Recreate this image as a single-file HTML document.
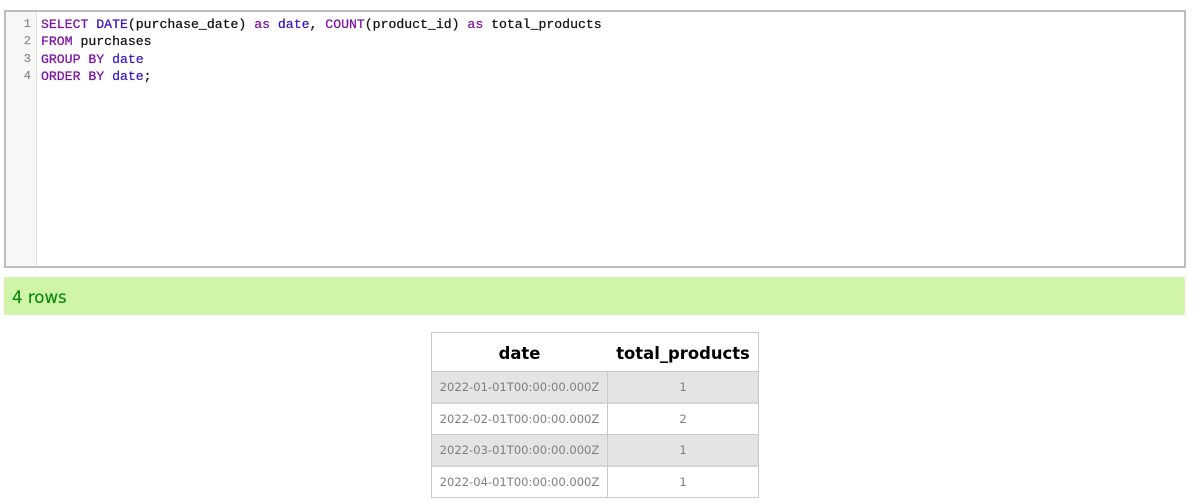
<!DOCTYPE html>
<html>
<head>
<meta charset="utf-8">
<style>
html,body{margin:0;padding:0;background:#fff;width:1200px;height:504px;overflow:hidden}
body{position:relative}
div{position:absolute;box-sizing:border-box}
#ed{left:4px;top:10px;width:1182px;height:258px;border:2px solid #bdbdbd;background:#fff}
#gut{left:6px;top:12px;width:31px;height:254px;background:#f7f7f7;border-right:1px solid #e2e2e2}
.c{left:41px;height:17px;font:13.17px/17px "Liberation Mono",monospace;color:#111;white-space:pre;-webkit-text-stroke:.25px currentColor;filter:blur(.25px)}
.n{left:6px;width:25px;text-align:right;font:12px/17px "Liberation Mono",monospace;color:#8f8f8f;height:17px;-webkit-text-stroke:.25px currentColor;filter:blur(.25px)}
.k{color:#7d12a5}.b{color:#3a14c0}
#ok{left:4px;top:277px;width:1181px;height:38px;background:#d0f5a9;color:#0a8a0a;font:16.6px/42px "DejaVu Sans",sans-serif;padding-left:8px;-webkit-text-stroke:.15px currentColor;overflow:hidden}
.h,.d{height:31px;text-align:center;font-family:"DejaVu Sans",sans-serif;white-space:nowrap}
.h{top:333px;height:38px;font-size:16.4px;font-weight:bold;line-height:41px;color:#000}
.d{font-size:11.55px;color:#7f7f7f;line-height:30px}
.g{background:#e4e4e4}
.l{background:#c9c9c9}
</style>
</head>
<body>
<div id="ed"></div>
<div id="gut"></div>
<div class="n" style="top:16px">1</div>
<div class="n" style="top:33px">2</div>
<div class="n" style="top:51px">3</div>
<div class="n" style="top:68px">4</div>
<div class="c" style="top:16px"><span class="k">SELECT</span> <span class="b">DATE</span>(purchase_date) <span class="k">as</span> <span class="b">date</span>, <span class="k">COUNT</span>(product_id) <span class="k">as</span> total_products</div>
<div class="c" style="top:33px"><span class="k">FROM</span> purchases</div>
<div class="c" style="top:51px"><span class="k">GROUP BY</span> <span class="b">date</span></div>
<div class="c" style="top:68px"><span class="k">ORDER BY</span> <span class="b">date</span>;</div>
<div id="ok">4 rows</div>

<div class="g" style="left:431px;top:372px;width:327px;height:30px"></div>
<div class="g" style="left:431px;top:435px;width:327px;height:30px"></div>

<div class="l" style="left:431px;top:332px;width:328px;height:1px"></div>
<div class="l" style="left:431px;top:371px;width:328px;height:1px"></div>
<div class="l" style="left:431px;top:402px;width:328px;height:2px;opacity:.75"></div>
<div class="l" style="left:431px;top:434px;width:328px;height:1px"></div>
<div class="l" style="left:431px;top:465px;width:328px;height:2px;opacity:.75"></div>
<div class="l" style="left:431px;top:497px;width:328px;height:1px"></div>
<div class="l" style="left:431px;top:332px;width:1px;height:166px"></div>
<div class="l" style="left:758px;top:332px;width:1px;height:166px"></div>
<div class="l" style="left:607px;top:371px;width:1px;height:127px"></div>

<div class="h" style="left:432px;width:175px">date</div>
<div class="h" style="left:608px;width:150px">total_products</div>

<div class="d" style="left:432px;width:175px;top:372px">2022-01-01T00:00:00.000Z</div>
<div class="d" style="left:608px;width:150px;top:372px">1</div>
<div class="d" style="left:432px;width:175px;top:404px">2022-02-01T00:00:00.000Z</div>
<div class="d" style="left:608px;width:150px;top:404px">2</div>
<div class="d" style="left:432px;width:175px;top:435px">2022-03-01T00:00:00.000Z</div>
<div class="d" style="left:608px;width:150px;top:435px">1</div>
<div class="d" style="left:432px;width:175px;top:467px">2022-04-01T00:00:00.000Z</div>
<div class="d" style="left:608px;width:150px;top:467px">1</div>
</body>
</html>
